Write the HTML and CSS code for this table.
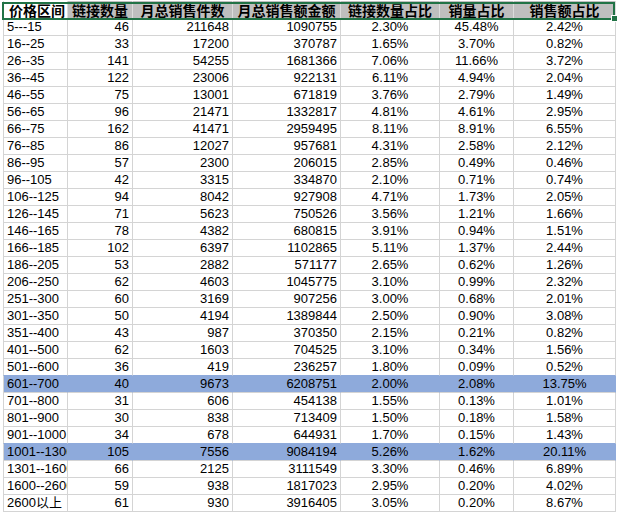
FILE: index.html
```html
<!DOCTYPE html>
<html>
<head>
<meta charset="utf-8">
<link rel="stylesheet" href="styles.css">
</head>
<body>
<div class="sheet">
<table class="grid">
<colgroup>
<col class="c1"><col class="c2"><col class="c3"><col class="c4"><col class="c5"><col class="c6"><col class="c7">
</colgroup>
<thead>
<tr class="head">
<th class="first">价格区间</th><th>链接数量</th><th>月总销售件数</th><th>月总销售额金额</th><th>链接数量占比</th><th>销量占比</th><th>销售额占比</th>
</tr>
</thead>
<tbody>
<tr><td class="t">5---15</td><td>46</td><td>211648</td><td>1090755</td><td class="p">2.30%</td><td class="p">45.48%</td><td class="p">2.42%</td></tr>
<tr><td class="t">16--25</td><td>33</td><td>17200</td><td>370787</td><td class="p">1.65%</td><td class="p">3.70%</td><td class="p">0.82%</td></tr>
<tr><td class="t">26--35</td><td>141</td><td>54255</td><td>1681366</td><td class="p">7.06%</td><td class="p">11.66%</td><td class="p">3.72%</td></tr>
<tr><td class="t">36--45</td><td>122</td><td>23006</td><td>922131</td><td class="p">6.11%</td><td class="p">4.94%</td><td class="p">2.04%</td></tr>
<tr><td class="t">46--55</td><td>75</td><td>13001</td><td>671819</td><td class="p">3.76%</td><td class="p">2.79%</td><td class="p">1.49%</td></tr>
<tr><td class="t">56--65</td><td>96</td><td>21471</td><td>1332817</td><td class="p">4.81%</td><td class="p">4.61%</td><td class="p">2.95%</td></tr>
<tr><td class="t">66--75</td><td>162</td><td>41471</td><td>2959495</td><td class="p">8.11%</td><td class="p">8.91%</td><td class="p">6.55%</td></tr>
<tr><td class="t">76--85</td><td>86</td><td>12027</td><td>957681</td><td class="p">4.31%</td><td class="p">2.58%</td><td class="p">2.12%</td></tr>
<tr><td class="t">86--95</td><td>57</td><td>2300</td><td>206015</td><td class="p">2.85%</td><td class="p">0.49%</td><td class="p">0.46%</td></tr>
<tr><td class="t">96--105</td><td>42</td><td>3315</td><td>334870</td><td class="p">2.10%</td><td class="p">0.71%</td><td class="p">0.74%</td></tr>
<tr><td class="t">106--125</td><td>94</td><td>8042</td><td>927908</td><td class="p">4.71%</td><td class="p">1.73%</td><td class="p">2.05%</td></tr>
<tr><td class="t">126--145</td><td>71</td><td>5623</td><td>750526</td><td class="p">3.56%</td><td class="p">1.21%</td><td class="p">1.66%</td></tr>
<tr><td class="t">146--165</td><td>78</td><td>4382</td><td>680815</td><td class="p">3.91%</td><td class="p">0.94%</td><td class="p">1.51%</td></tr>
<tr><td class="t">166--185</td><td>102</td><td>6397</td><td>1102865</td><td class="p">5.11%</td><td class="p">1.37%</td><td class="p">2.44%</td></tr>
<tr><td class="t">186--205</td><td>53</td><td>2882</td><td>571177</td><td class="p">2.65%</td><td class="p">0.62%</td><td class="p">1.26%</td></tr>
<tr><td class="t">206--250</td><td>62</td><td>4603</td><td>1045775</td><td class="p">3.10%</td><td class="p">0.99%</td><td class="p">2.32%</td></tr>
<tr><td class="t">251--300</td><td>60</td><td>3169</td><td>907256</td><td class="p">3.00%</td><td class="p">0.68%</td><td class="p">2.01%</td></tr>
<tr><td class="t">301--350</td><td>50</td><td>4194</td><td>1389844</td><td class="p">2.50%</td><td class="p">0.90%</td><td class="p">3.08%</td></tr>
<tr><td class="t">351--400</td><td>43</td><td>987</td><td>370350</td><td class="p">2.15%</td><td class="p">0.21%</td><td class="p">0.82%</td></tr>
<tr><td class="t">401--500</td><td>62</td><td>1603</td><td>704525</td><td class="p">3.10%</td><td class="p">0.34%</td><td class="p">1.56%</td></tr>
<tr class="before-hl"><td class="t">501--600</td><td>36</td><td>419</td><td>236257</td><td class="p">1.80%</td><td class="p">0.09%</td><td class="p">0.52%</td></tr>
<tr class="hl"><td class="t">601--700</td><td>40</td><td>9673</td><td>6208751</td><td class="p">2.00%</td><td class="p">2.08%</td><td class="p">13.75%</td></tr>
<tr><td class="t">701--800</td><td>31</td><td>606</td><td>454138</td><td class="p">1.55%</td><td class="p">0.13%</td><td class="p">1.01%</td></tr>
<tr><td class="t">801--900</td><td>30</td><td>838</td><td>713409</td><td class="p">1.50%</td><td class="p">0.18%</td><td class="p">1.58%</td></tr>
<tr class="before-hl"><td class="t">901--1000</td><td>34</td><td>678</td><td>644931</td><td class="p">1.70%</td><td class="p">0.15%</td><td class="p">1.43%</td></tr>
<tr class="hl"><td class="t">1001--1300</td><td>105</td><td>7556</td><td>9084194</td><td class="p">5.26%</td><td class="p">1.62%</td><td class="p">20.11%</td></tr>
<tr><td class="t">1301--1600</td><td>66</td><td>2125</td><td>3111549</td><td class="p">3.30%</td><td class="p">0.46%</td><td class="p">6.89%</td></tr>
<tr><td class="t">1600--2600</td><td>59</td><td>938</td><td>1817023</td><td class="p">2.95%</td><td class="p">0.20%</td><td class="p">4.02%</td></tr>
<tr><td class="t">2600以上</td><td>61</td><td>930</td><td>3916405</td><td class="p">3.05%</td><td class="p">0.20%</td><td class="p">8.67%</td></tr>
</tbody>
</table>
<div class="selection"><span class="handle"></span></div>
</div>
</body>
</html>
```

FILE: styles.css
```css
html, body {
  margin: 0;
  padding: 0;
  background: #ffffff;
}

.sheet {
  position: relative;
  width: 617px;
  height: 513px;
  overflow: hidden;
  padding: 1px 0 0 3px;
  box-sizing: border-box;
}

.grid {
  border-collapse: separate;
  border-spacing: 0;
  table-layout: fixed;
  width: 613px;
  font-family: "Liberation Sans", Arial, "Noto Sans CJK SC", sans-serif;
  font-size: 13px;
  color: #000;
}

.c1 { width: 65px; }
.c2 { width: 65px; }
.c3 { width: 100px; }
.c4 { width: 108px; }
.c5 { width: 99px; }
.c6 { width: 74px; }
.c7 { width: 102px; }

.grid th,
.grid td {
  box-sizing: border-box;
  border-right: 1px solid #d4d4d4;
  border-bottom: 1px solid #d4d4d4;
  padding: 0 3px;
  white-space: nowrap;
  overflow: hidden;
  vertical-align: bottom;
}

.grid tr > :first-child {
  border-left: 1px solid #d4d4d4;
}

.head th {
  height: 18px;
  background: #bfbfbf;
  font-family: "Noto Sans CJK SC", sans-serif;
  font-weight: 700;
  font-size: 14px;
  line-height: 15px;
  text-align: center;
  padding: 0;
  border-right-color: #dcdcdc;
}

.head th.first {
  background: #ffffff;
  text-align: left;
  padding-left: 5px;
}

.grid td {
  height: 17px;
  line-height: 13px;
  padding-bottom: 2px;
  text-align: right;
}

.grid td.t {
  text-align: left;
  text-overflow: clip;
  padding-right: 0;
}

.grid td.p {
  text-align: center;
}

.grid tr.hl td {
  background: #8eaadb;
  border-right-color: #8eaadb;
}

.grid tr.before-hl td {
  border-bottom-color: #8eaadb;
}

.selection {
  position: absolute;
  left: 2px;
  top: 2px;
  width: 613px;
  height: 18px;
  box-sizing: border-box;
  border: 2px solid #217346;
}

.handle {
  position: absolute;
  right: -5px;
  bottom: -4px;
  width: 5px;
  height: 5px;
  background: #217346;
  border: 1px solid #ffffff;
}
```
